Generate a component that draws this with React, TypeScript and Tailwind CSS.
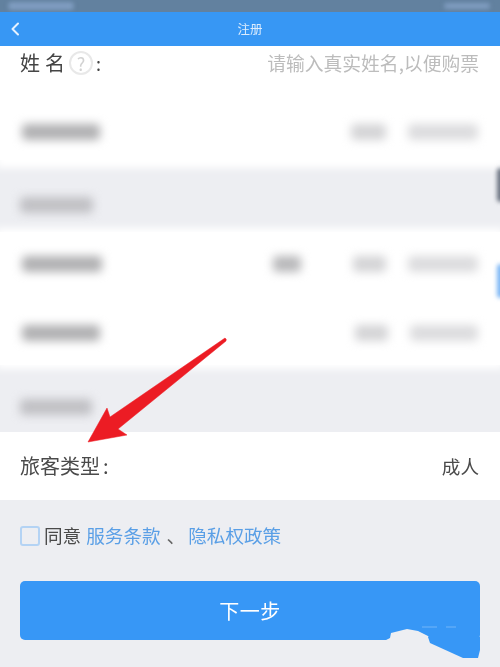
const B = ({ w, tone = "bg-[#b0b0b2]" }: { w: string; tone?: string }) => (
  <div className={`h-[16px] rounded-sm blur-[5px] ${w} ${tone}`} />
);

const Right = ({ a, b }: { a: string; b: string }) => (
  <div className="flex items-center gap-[22px]">
    <B w={a} tone="bg-[#d4d4d6]" />
    <B w={b} tone="bg-[#dcdcde]" />
  </div>
);

export default function App() {
  return (
    <div
      className="relative w-[500px] h-[667px] overflow-hidden bg-[#edeef2] flex flex-col"
      style={{ fontFamily: '"Noto Sans CJK SC", "Noto Sans", sans-serif' }}
    >
      <div className="h-[12px] shrink-0 bg-[#62819f] flex items-center justify-between pl-[8px] pr-[10px]">
        <div className="h-[8px] w-[66px] bg-[#7f9cc0] rounded-sm blur-[2px]" />
        <div className="h-[6px] w-[46px] bg-[#7f9cc0] rounded-sm blur-[2px]" />
      </div>

      <div className="h-[34px] shrink-0 bg-[#3797f4] flex items-center justify-center relative">
        <svg className="absolute left-[10px] top-[9px]" width="10" height="16" viewBox="0 0 10 16" fill="none">
          <path d="M8 2.5 L2.5 8 L8 13.5" stroke="#e6f2ff" strokeWidth="2" strokeLinecap="round" strokeLinejoin="round" />
        </svg>
        <span className="text-[12.5px] text-[#dcecfd] blur-[0.4px]">注册</span>
      </div>

      <div className="h-[34px] shrink-0 bg-white flex items-center justify-between pl-[20px] pr-[21px]">
        <div className="flex items-center text-[#444] text-[20px] blur-[0.4px]">
          <span className="tracking-[5px]">姓名</span>
          <span className="ml-[-1px] w-[24px] h-[24px] rounded-full border-2 border-[#e8e8e8] text-[#d2d2d2] text-[18px] leading-none flex items-center justify-center">?</span>
          <span className="ml-[3px] text-[18px]">:</span>
        </div>
        <span className="text-[#bcbcbc] text-[18.8px] blur-[0.4px]">请输入真实姓名,以便购票</span>
      </div>

      <div className="h-[80px] shrink-0 bg-white shadow-[0_4px_8px_4px_#ffffff] relative flex items-end justify-between pb-[20px] pl-[22px] pr-[22px]">
        <B w="w-[78px]" />
        <Right a="w-[35px]" b="w-[70px]" />
      </div>

      <div className="h-[72px] shrink-0 bg-[#edeef2] flex items-center pl-[20px] pt-[18px]">
        <B w="w-[73px]" tone="bg-[#c0c0c4]" />
      </div>

      <div className="h-[133px] shrink-0 bg-white shadow-[0_0_8px_4px_#ffffff] relative flex flex-col px-[22px] pt-[24px] gap-[53px]">
        <div className="flex items-center justify-between">
          <B w="w-[80px]" />
          <div className="flex items-center gap-[52px]">
            <B w="w-[28px]" tone="bg-[#b8b8ba]" />
            <Right a="w-[33px]" b="w-[70px]" />
          </div>
        </div>
        <div className="flex items-center justify-between">
          <B w="w-[78px]" />
          <Right a="w-[33px]" b="w-[68px]" />
        </div>
      </div>

      <div className="h-[67px] shrink-0 bg-[#edeef2] flex items-center pl-[20px] pt-[16px]">
        <B w="w-[72px]" tone="bg-[#c0c0c4]" />
      </div>

      <div className="h-[68px] shrink-0 bg-white flex items-center justify-between pl-[20px] pr-[21px] pb-[1px] text-[#4a4a4a] blur-[0.4px]">
        <span className="text-[20px]">旅客类型<span className="ml-[3px]">:</span></span>
        <span className="text-[18.6px]">成人</span>
      </div>

      <div className="flex items-center pl-[20px] pt-[25px] text-[18.6px] leading-[22px] blur-[0.4px]">
        <div className="w-[20px] h-[20px] rounded-[3px] border-2 border-[#b4d3f4] mr-[4px] mb-[1px]" />
        <span className="text-[#4a4a4a] relative top-[-1px]">同意</span>
        <span className="ml-[5px] text-[#5a9fe6] relative top-[-1px]">服务条款</span>
        <span className="ml-[6px] text-[#666] relative top-[-1px]">、</span>
        <span className="ml-[3px] text-[#5a9fe6] relative top-[-1px]">隐私权政策</span>
      </div>

      <div className="mx-[20px] mt-[34px] h-[59px] rounded-[5px] bg-[#3797f6] flex items-center justify-center">
        <span className="text-white text-[20px] tracking-[0.5px] blur-[0.4px]">下一步</span>
      </div>

      <svg className="absolute left-0 top-0 pointer-events-none" width="500" height="667" viewBox="0 0 500 667">
        <path d="M225 338 Q227 339 226 341 L118 429 L127 435 L88 442 L107 408 L110 417 Z" fill="#ec1c24" stroke="#ec1c24" strokeWidth="0.5" strokeLinejoin="round" />
        <path d="M384 641 L390 638 L391 633 L407 629 L418 631 L428 636 L431 641 Z" fill="#edeef2" />
        <path d="M428 637 L480 637 L480 650 L478 658 L463 658 L430 643 Z" fill="#3797f6" />
        <path d="M422 627 L437 627 M446 627 L456 627" stroke="#8cc3fa" strokeWidth="0.7" />
      </svg>

      <div className="absolute right-[-4px] top-[168px] w-[7px] h-[34px] rounded bg-[#6a7280] blur-[2px]" />
      <div className="absolute right-[-4px] top-[264px] w-[7px] h-[34px] rounded bg-[#7ab5f5] blur-[2px]" />
    </div>
  );
}
